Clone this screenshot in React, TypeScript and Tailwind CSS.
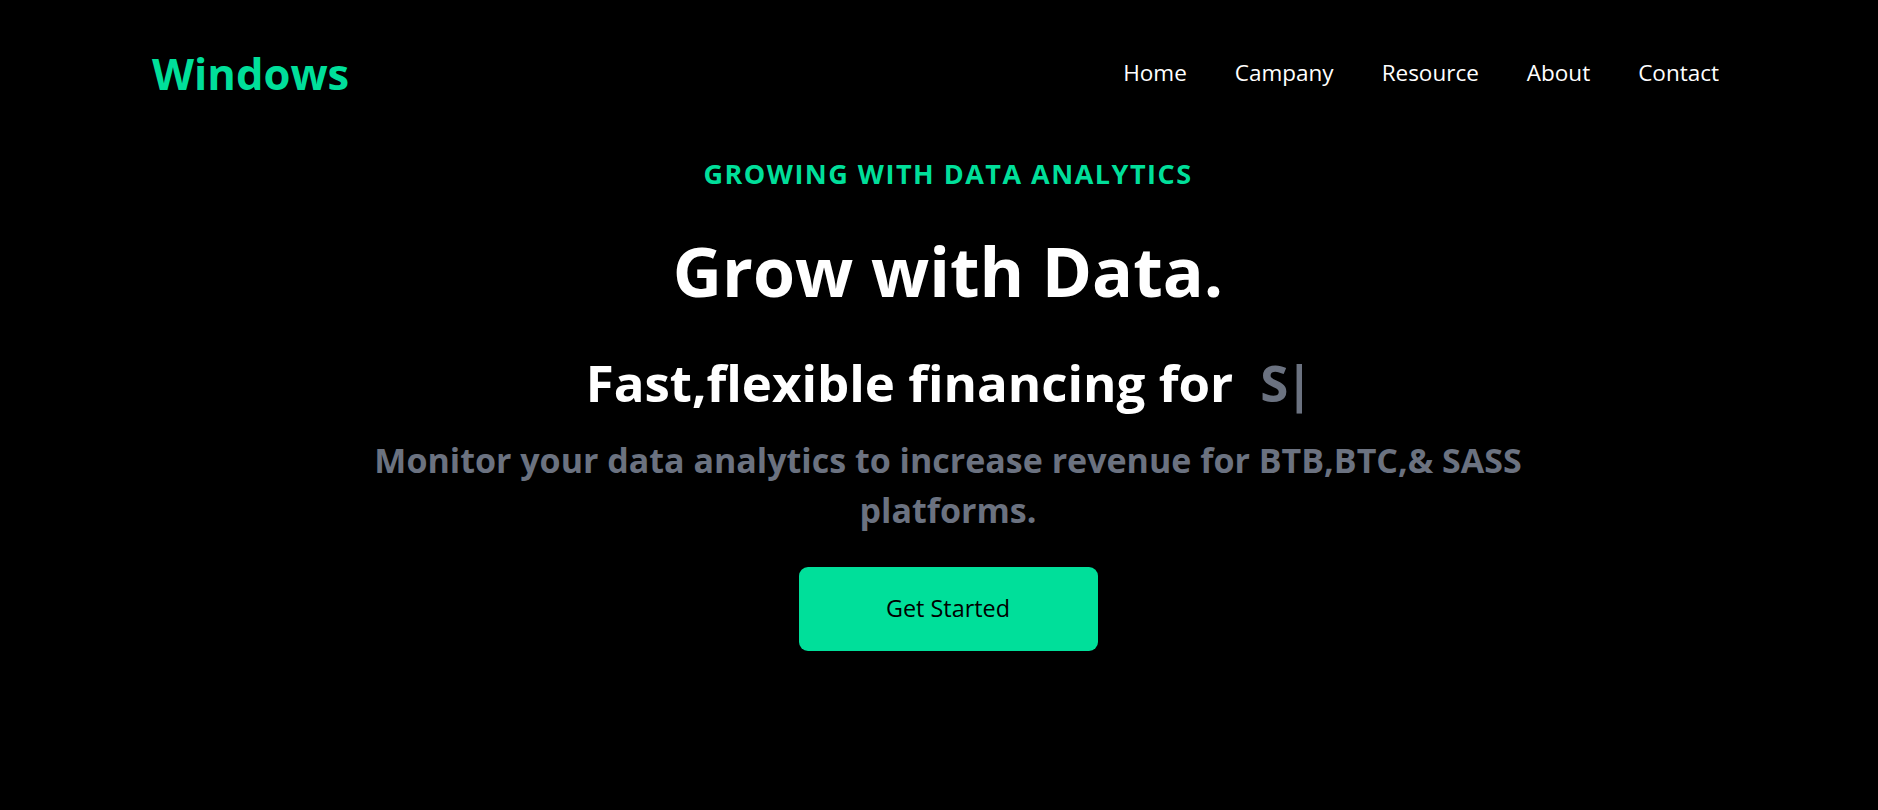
import { useState } from "react";

const NAV = ["Home", "Campany", "Resource", "About", "Contact"];

function Navbar() {
  return (
    <div className="flex items-center justify-between h-[144px] pl-[152px] pr-[135px] text-white">
      <h1 className="text-[43.5px] leading-none font-bold text-[#00df9a] mt-[3px]">Windows</h1>
      <ul className="flex mt-[2px]">
        {NAV.map(item => (
          <li key={item} className="px-[24px] text-[22.5px] leading-none cursor-pointer">{item}</li>
        ))}
      </ul>
    </div>
  );
}

function Hero() {
  const [word] = useState("S");
  return (
    <div className="text-white pl-[18px]">
      <div className="max-w-[1200px] w-full mx-auto text-center flex flex-col">
        <p className="mt-[12px] text-[27px] leading-[36px] tracking-[1.5px] font-bold text-[#00df9a]">GROWING WITH DATA ANALYTICS</p>
        <h1 className="mt-[43px] text-[68px] leading-[72px] font-bold">Grow with Data.</h1>
        <div className="mt-[45px] flex justify-center items-center">
          <p className="text-[51px] leading-[60px] font-bold">Fast,flexible financing for</p>
          <span className="text-[51px] leading-[60px] font-bold pl-[27px] text-[#6b7280]">
            {word}
            <span className="ml-[-3px] mr-[-3px]">|</span>
          </span>
        </div>
        <p className="mt-[23px] text-[34px] leading-[50px] font-bold text-[#6b7280]">
          Monitor your data analytics to increase revenue for BTB,BTC,&amp; SASS platforms.
        </p>
        <button className="mt-[32px] mx-auto w-[299px] h-[84px] rounded-[9px] bg-[#00df9a] text-black text-[23.4px] font-medium">
          Get Started
        </button>
      </div>
    </div>
  );
}

export default function App() {
  return (
    <div className="min-h-screen w-full bg-black font-['Open_Sans',sans-serif]">
      <Navbar />
      <Hero />
    </div>
  );
}
